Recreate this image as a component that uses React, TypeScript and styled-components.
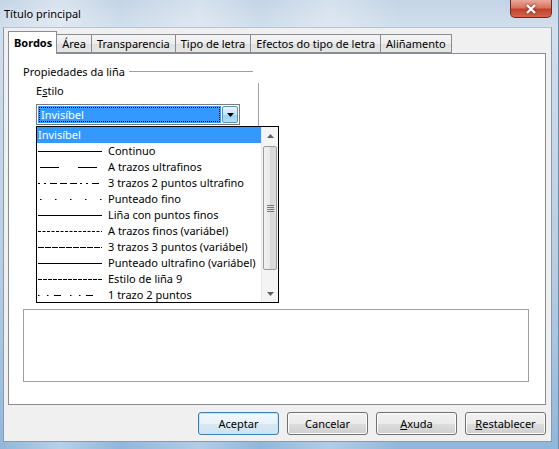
import React from "react";
import styled, { createGlobalStyle } from "styled-components";

const GlobalStyle = createGlobalStyle`
  html, body {
    margin: 0;
    padding: 0;
  }
  body {
    width: 559px;
    height: 449px;
    overflow: hidden;
    font-family: "Noto Sans", "DejaVu Sans", sans-serif;
    font-size: 11px;
    color: #000;
  }
`;

const tabs = ["Bordos", "Área", "Transparencia", "Tipo de letra", "Efectos do tipo de letra", "Aliñamento"];

type LineItem = { label: string; dash?: string; offset?: number; none?: boolean };

const lineStyles: LineItem[] = [
  { label: "Invisíbel", none: true },
  { label: "Continuo" },
  { label: "A trazos ultrafinos", dash: "19 19", offset: -2 },
  { label: "3 trazos 2 puntos ultrafino", dash: "2 4 2 4 7 3 7 3 7 3" },
  { label: "Punteado fino", dash: "1.5 13.5", offset: -2 },
  { label: "Liña con puntos finos" },
  { label: "A trazos finos (variábel)", dash: "3 1.5" },
  { label: "3 trazos 3 puntos (variábel)", dash: "6 1" },
  { label: "Punteado ultrafino (variábel)" },
  { label: "Estilo de liña 9", dash: "4 1" },
  { label: "1 trazo 2 puntos", dash: "1.5 7.5 1.5 5.5 7 9" },
];

const App = () => {
  return (
    <Window>
      <GlobalStyle />
      <TitleBar>
        <Title>Título principal</Title>
        <CloseButton>
          <CloseGlyph viewBox="0 0 12 10">
            <path d="M2 1 L10 9 M10 1 L2 9" />
          </CloseGlyph>
        </CloseButton>
      </TitleBar>
      <Client>
        <TabRow>
          {tabs.map((t, i) => (
            <Tab key={t} $active={i === 0}>
              {t}
            </Tab>
          ))}
        </TabRow>
        <Panel>
          <GroupHeader>
            <span>Propiedades da liña</span>
            <HeaderRule />
          </GroupHeader>
          <GroupBody>
            <Column>
              <FieldLabel>
                E<u>s</u>tilo
              </FieldLabel>
              <ComboWrap>
                <Combo>
                  <ComboField>
                    <FocusText>Invisíbel</FocusText>
                  </ComboField>
                  <ComboButton>
                    <svg width="7" height="4" viewBox="0 0 7 4">
                      <path d="M0 0 H7 L3.5 4 Z" fill="#000" />
                    </svg>
                  </ComboButton>
                </Combo>
                <DropList>
                  <Items>
                    {lineStyles.map((s, i) => (
                      <Item key={s.label} $selected={i === 0}>
                        {!s.none && (
                          <Sample width="64" height="16" viewBox="0 0 64 16">
                            <line
                              x1="0"
                              y1="8.5"
                              x2="64"
                              y2="8.5"
                              stroke="#000"
                              strokeWidth="1"
                              strokeDasharray={s.dash}
                              strokeDashoffset={s.offset}
                            />
                          </Sample>
                        )}
                        <span>{s.label}</span>
                      </Item>
                    ))}
                  </Items>
                  <ScrollBar>
                    <ArrowBox>
                      <svg width="7" height="4" viewBox="0 0 7 4">
                        <path d="M0 4 H7 L3.5 0 Z" fill="#606060" />
                      </svg>
                    </ArrowBox>
                    <Track>
                      <Thumb>
                        <Grip />
                        <Grip />
                        <Grip />
                        <Grip />
                      </Thumb>
                    </Track>
                    <ArrowBox>
                      <svg width="7" height="4" viewBox="0 0 7 4">
                        <path d="M0 0 H7 L3.5 4 Z" fill="#606060" />
                      </svg>
                    </ArrowBox>
                  </ScrollBar>
                </DropList>
              </ComboWrap>
            </Column>
            <Separator />
          </GroupBody>
          <Preview />
        </Panel>
        <ButtonRow>
          <Button $default>Aceptar</Button>
          <Button>Cancelar</Button>
          <Button>
            <u>A</u>xuda
          </Button>
          <Button>
            <u>R</u>establecer
          </Button>
        </ButtonRow>
      </Client>
    </Window>
  );
};

const Window = styled.div`
  width: 559px;
  height: 449px;
  box-sizing: border-box;
  display: flex;
  flex-direction: column;
  background:
    linear-gradient(90deg, rgba(255, 255, 255, 0) 0px, rgba(255, 255, 255, 0.35) 60px, rgba(255, 255, 255, 0) 120px,
      rgba(255, 255, 255, 0.3) 200px, rgba(255, 255, 255, 0) 260px, rgba(255, 255, 255, 0.3) 330px, rgba(255, 255, 255, 0) 400px),
    linear-gradient(180deg, #c3d4e6 0px, #d2dfec 28px, #b9cde2 60%, #8fb7dc 100%);
  border-right: 1px solid #6f8aa5;
`;

const TitleBar = styled.div`
  height: 29px;
  display: flex;
  justify-content: space-between;
  align-items: flex-start;
  padding-left: 4px;
`;

const Title = styled.div`
  margin-top: 6px;
  font-size: 11px;
  color: #000;
  text-shadow: 0 0 6px rgba(255, 255, 255, 0.9);
`;

const CloseButton = styled.div`
  width: 42px;
  height: 18px;
  margin-right: 6px;
  box-sizing: border-box;
  border: 1px solid #6e2a1e;
  border-top: none;
  border-radius: 0 0 5px 5px;
  background: linear-gradient(180deg, #e9a99a 0%, #d8735f 45%, #c0432b 55%, #d3654b 100%);
  display: flex;
  align-items: center;
  justify-content: center;
`;

const CloseGlyph = styled.svg`
  width: 12px;
  height: 10px;
  path {
    stroke: #fff;
    stroke-width: 2.4;
    fill: none;
  }
  filter: drop-shadow(0 0 1px #5a1a10);
`;

const Client = styled.div`
  flex: 1;
  margin: 0 6px 7px 3px;
  padding: 3px 5px 6px 4px;
  background: #f0f0f0;
  border: 1px solid #8a9aab;
  border-top-color: #b4c2d2;
  display: flex;
  flex-direction: column;
`;

const TabRow = styled.div`
  height: 22px;
  display: flex;
  align-items: flex-end;
  position: relative;
  z-index: 1;
`;

const Tab = styled.div<{ $active?: boolean }>`
  box-sizing: border-box;
  height: ${p => (p.$active ? "23px" : "19px")};
  margin-bottom: ${p => (p.$active ? "-1px" : "0")};
  margin-left: ${p => (p.$active ? "0" : "-1px")};
  padding: ${p => (p.$active ? "3px 4px 0 5px" : "1px 5px 0 5px")};
  border: 1px solid #898c95;
  border-bottom: ${p => (p.$active ? "none" : "1px solid #898c95")};
  background: ${p => (p.$active ? "#fff" : "linear-gradient(180deg, #f6f6f6 0%, #ececec 50%, #dfdfdf 51%, #e6e6e6 100%)")};
  font-weight: ${p => (p.$active ? "bold" : "normal")};
  white-space: nowrap;
  line-height: 15px;
  &:first-child {
    margin-left: 0;
  }
`;

const Panel = styled.div`
  height: 352px;
  box-sizing: border-box;
  border: 1px solid #898c95;
  background: #fff;
  padding: 10px 15px 0 14px;
  display: flex;
  flex-direction: column;
`;

const GroupHeader = styled.div`
  width: 230px;
  display: flex;
  align-items: center;
  gap: 4px;
  line-height: 15px;
`;

const HeaderRule = styled.div`
  flex: 1;
  height: 1px;
  background: #a0a0a0;
`;

const GroupBody = styled.div`
  display: flex;
  height: 226px;
`;

const Column = styled.div`
  width: 222px;
  padding-left: 13px;
  padding-top: 4px;
  display: flex;
  flex-direction: column;
`;

const FieldLabel = styled.div`
  line-height: 15px;
  margin-bottom: 6px;
  u {
    text-decoration-thickness: 1px;
  }
`;

const ComboWrap = styled.div`
  position: relative;
  width: 204px;
`;

const Combo = styled.div`
  height: 21px;
  box-sizing: border-box;
  border: 1px solid #7a7a7a;
  background: #fff;
  padding: 1px;
  display: flex;
`;

const ComboField = styled.div`
  flex: 1;
  background: #3399ff;
  color: #fff;
  display: flex;
  padding: 1px 1px;
`;

const FocusText = styled.div`
  flex: 1;
  border: 1px dotted #000;
  padding-left: 1px;
  line-height: 13px;
`;

const ComboButton = styled.div`
  width: 16px;
  margin-left: 1px;
  box-sizing: border-box;
  border: 1px solid #5f91b4;
  border-radius: 2px;
  background: linear-gradient(180deg, #e5f4fc 0%, #c4e5f6 50%, #98d1ef 51%, #b7e0f4 100%);
  display: flex;
  align-items: center;
  justify-content: center;
`;

const DropList = styled.div`
  position: absolute;
  top: 22px;
  left: 0;
  width: 243px;
  height: 177px;
  box-sizing: border-box;
  border: 1px solid #000;
  background: #fff;
  display: flex;
  z-index: 2;
`;

const Items = styled.div`
  flex: 1;
  display: flex;
  flex-direction: column;
`;

const Item = styled.div<{ $selected?: boolean }>`
  height: 16px;
  display: flex;
  align-items: center;
  gap: 6px;
  padding-left: 1px;
  background: ${p => (p.$selected ? "#3399ff" : "transparent")};
  color: ${p => (p.$selected ? "#fff" : "#000")};
  white-space: nowrap;
  line-height: 16px;
`;

const Sample = styled.svg`
  flex: none;
  display: block;
`;

const ScrollBar = styled.div`
  width: 16px;
  display: flex;
  flex-direction: column;
  background: #f4f4f4;
  border-left: 1px solid #e8e8e8;
`;

const ArrowBox = styled.div`
  height: 17px;
  display: flex;
  align-items: center;
  justify-content: center;
`;

const Track = styled.div`
  flex: 1;
  padding: 2px 0 0 0;
  display: flex;
  flex-direction: column;
`;

const Thumb = styled.div`
  height: 124px;
  margin: 0 1px;
  box-sizing: border-box;
  border: 1px solid #9b9b9b;
  border-radius: 2px;
  background: linear-gradient(90deg, #f2f2f2 0%, #e8e8e8 50%, #d8d8d8 51%, #dcdcdc 100%);
  display: flex;
  flex-direction: column;
  align-items: center;
  justify-content: center;
  gap: 1px;
`;

const Grip = styled.div`
  width: 7px;
  height: 1px;
  background: #777;
`;

const Separator = styled.div`
  width: 1px;
  margin-top: 4px;
  height: 216px;
  background: #a0a0a0;
`;

const Preview = styled.div`
  margin-top: 4px;
  width: 506px;
  height: 73px;
  box-sizing: border-box;
  border: 1px solid #a0a0a0;
  background: #fff;
`;

const ButtonRow = styled.div`
  margin-top: 7px;
  display: flex;
  justify-content: flex-end;
  gap: 8px;
`;

const Button = styled.div<{ $default?: boolean }>`
  width: 81px;
  height: 23px;
  box-sizing: border-box;
  border: 1px solid ${p => (p.$default ? "#3c7fb1" : "#707070")};
  border-radius: 3px;
  box-shadow: inset 0 0 0 1px ${p => (p.$default ? "#bfe6fb" : "#fcfcfc")};
  background: ${p =>
    p.$default
      ? "linear-gradient(180deg, #f4f9fc 0%, #e6f1f8 50%, #d6e8f3 51%, #cfe3f0 100%)"
      : "linear-gradient(180deg, #f2f2f2 0%, #ebebeb 50%, #dddddd 51%, #cfcfcf 100%)"};
  display: flex;
  align-items: center;
  justify-content: center;
  line-height: 15px;
`;

export default App;
